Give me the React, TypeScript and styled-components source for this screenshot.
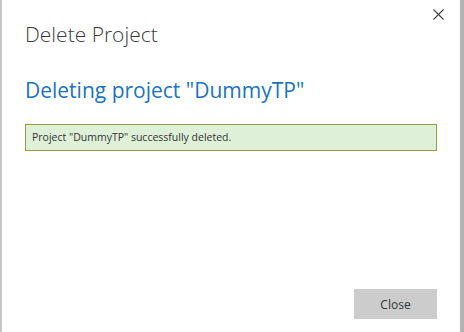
import React from 'react';
import styled, { createGlobalStyle } from 'styled-components';

const GlobalStyle = createGlobalStyle`
  html, body {
    margin: 0;
    padding: 0;
    background: #ffffff;
  }
  body {
    font-family: "Open Sans", "Noto Sans", sans-serif;
  }
`;

export default function App() {
  return (
    <>
      <GlobalStyle />
      <Frame>
        <Dialog>
          <Header>
            <Title>Delete Project</Title>
            <CloseIcon aria-label="Close">
              <svg width="11" height="11" viewBox="0 0 11 11">
                <path d="M0.5 0.5 L10.5 10.5 M10.5 0.5 L0.5 10.5" stroke="#444" strokeWidth="1.1" fill="none" />
              </svg>
            </CloseIcon>
          </Header>
          <Body>
            <Heading>Deleting project "DummyTP"</Heading>
            <SuccessBox>Project "DummyTP" successfully deleted.</SuccessBox>
          </Body>
          <Footer>
            <CloseButton>Close</CloseButton>
          </Footer>
        </Dialog>
        <Edge />
      </Frame>
    </>
  );
}

const Frame = styled.div`
  display: flex;
  width: 464px;
  height: 332px;
  background: #ffffff;
`;

const Dialog = styled.div`
  flex: 1;
  display: flex;
  flex-direction: column;
  border-left: 2px solid #c6c6c6;
  padding: 0 23px 0 23px;
`;

const Edge = styled.div`
  width: 4px;
  background: #b4b4b4;
`;

const Header = styled.div`
  display: flex;
  justify-content: space-between;
  align-items: flex-start;
  padding-top: 18px;
`;

const Title = styled.h1`
  margin: 0;
  font-weight: 300;
  font-size: 21px;
  line-height: 32px;
  color: #3c3c3c;
`;

const CloseIcon = styled.div`
  margin-top: -9px;
  margin-right: -7px;
  width: 11px;
  height: 11px;
  display: flex;
`;

const Body = styled.div`
  flex: 1;
  padding-top: 26px;
`;

const Heading = styled.h2`
  margin: 0 0 20px 0;
  font-weight: 400;
  font-size: 21px;
  line-height: 28px;
  color: #1a73c4;
`;

const SuccessBox = styled.div`
  border: 1px solid #9a9a40;
  background: #dff0d8;
  color: #333333;
  font-size: 10.5px;
  line-height: 25px;
  padding: 0 6px;
`;

const Footer = styled.div`
  display: flex;
  justify-content: flex-end;
  padding-bottom: 13px;
`;

const CloseButton = styled.button`
  width: 83px;
  height: 30px;
  border: none;
  background: #cccccc;
  color: #333333;
  font-family: "Open Sans", "Noto Sans", sans-serif;
  font-size: 12px;
  padding: 0;
`;
